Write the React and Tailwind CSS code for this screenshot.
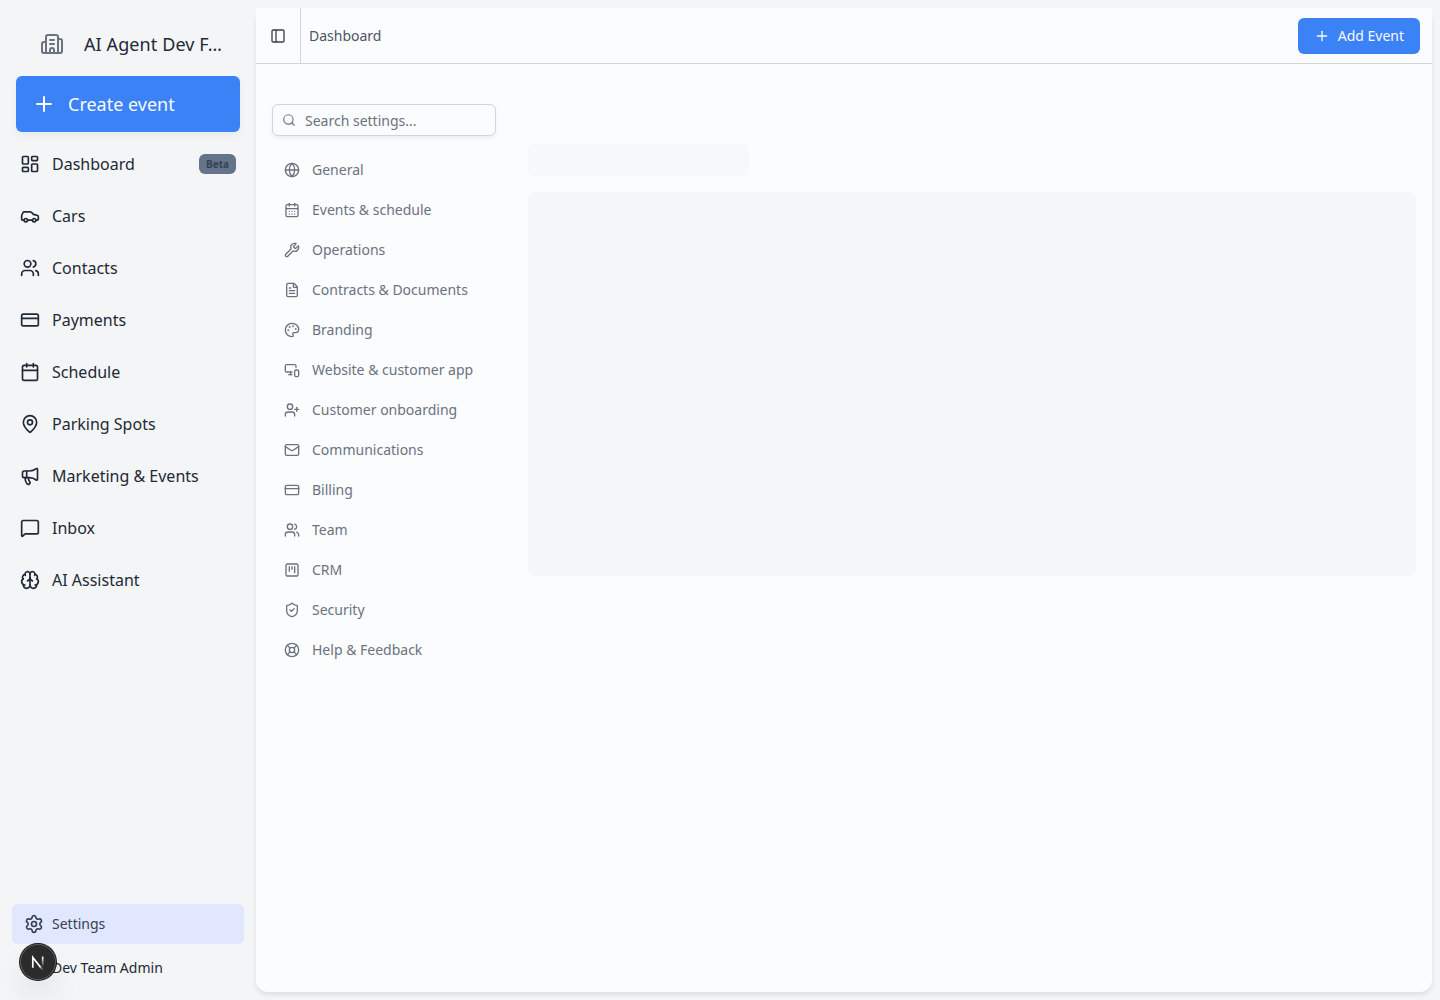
import React from "react";
import {
  Building2, Plus, LayoutDashboard, Car, Users, CreditCard, Calendar, MapPin, Megaphone,
  MessageSquare, Brain, Settings, PanelLeft, Search, Globe, CalendarDays, Wrench, FileText,
  Palette, MonitorSmartphone, UserPlus, Mail, SquareKanban, ShieldCheck, LifeBuoy,
} from "lucide-react";

const mainNav = [
  { label: "Dashboard", icon: LayoutDashboard, badge: "Beta" },
  { label: "Cars", icon: Car },
  { label: "Contacts", icon: Users },
  { label: "Payments", icon: CreditCard },
  { label: "Schedule", icon: Calendar },
  { label: "Parking Spots", icon: MapPin },
  { label: "Marketing & Events", icon: Megaphone },
  { label: "Inbox", icon: MessageSquare },
  { label: "AI Assistant", icon: Brain },
];

const settingsNav = [
  { label: "General", icon: Globe },
  { label: "Events & schedule", icon: CalendarDays },
  { label: "Operations", icon: Wrench },
  { label: "Contracts & Documents", icon: FileText },
  { label: "Branding", icon: Palette },
  { label: "Website & customer app", icon: MonitorSmartphone },
  { label: "Customer onboarding", icon: UserPlus },
  { label: "Communications", icon: Mail },
  { label: "Billing", icon: CreditCard },
  { label: "Team", icon: Users },
  { label: "CRM", icon: SquareKanban },
  { label: "Security", icon: ShieldCheck },
  { label: "Help & Feedback", icon: LifeBuoy },
];

function DevBadge() {
  return (
    <div className="absolute left-5 bottom-5 size-9 rounded-full bg-[#2b2b2b] shadow-[0_0_0_1px_#171717,inset_0_0_0_1px_#5a5a5a,0_16px_32px_-8px_rgba(0,0,0,0.24)]">
      <svg viewBox="0 0 36 36" className="size-9" fill="none">
        <defs>
          <linearGradient id="diag" x1="20" y1="20" x2="24" y2="26" gradientUnits="userSpaceOnUse">
            <stop stopColor="#fff" />
            <stop offset="1" stopColor="#fff" stopOpacity="0" />
          </linearGradient>
          <linearGradient id="stem" x1="22.6" y1="13" x2="22.6" y2="23" gradientUnits="userSpaceOnUse">
            <stop stopColor="#fff" />
            <stop offset="1" stopColor="#fff" stopOpacity="0" />
          </linearGradient>
        </defs>
        <path d="M12.8 23.8V13.4l7.6 9.6" stroke="#fff" strokeWidth="1.7" />
        <path d="M20 22.5l2.8 3.4" stroke="url(#diag)" strokeWidth="1.7" />
        <path d="M22.7 12.6V23" stroke="url(#stem)" strokeWidth="1.7" />
      </svg>
    </div>
  );
}

function Sidebar() {
  return (
    <aside className="flex w-64 shrink-0 flex-col text-[#1f2937]">
      <div className="mt-5 flex h-12 items-center gap-5 pl-10 pr-8">
        <Building2 className="size-6 shrink-0 text-[#6b7280]" strokeWidth={2} />
        <span className="whitespace-nowrap text-lg tracking-[0.1px]">AI Agent Dev F…</span>
      </div>
      <button className="mx-4 mt-2 flex h-14 shrink-0 items-center gap-3 rounded-md bg-[#3b82f6] px-4 text-lg text-[#f8fafc] shadow-[0_4px_8px_rgba(0,0,0,0.05)]">
        <Plus className="size-6" />
        Create event
      </button>
      <nav className="mt-2 flex flex-col gap-1 px-3">
        {mainNav.map(({ label, icon: Icon, badge }) => (
          <a key={label} className="flex h-12 items-center gap-3 px-2">
            <Icon className="size-5 shrink-0" />
            <span className="text-base">{label}</span>
            {badge && (
              <span className="ml-auto flex h-5 w-[37px] items-center justify-center rounded-md bg-[#64748b] text-[10px] font-bold text-[#374151]">
                {badge}
              </span>
            )}
          </a>
        ))}
      </nav>
      <div className="mt-auto mb-3 px-3 text-sm">
        <a className="flex h-10 items-center gap-2 rounded-md bg-[#e0e7ff] pl-3 text-[#374151]">
          <Settings className="size-5" />
          Settings
        </a>
        <div className="mt-1 flex h-10 items-center pl-10">Dev Team Admin</div>
      </div>
    </aside>
  );
}

export default function App() {
  return (
    <div className="relative flex h-[1000px] w-[1440px] overflow-hidden bg-[#f3f5f6] font-['Noto_Sans',sans-serif]">
      <Sidebar />
      <main className="my-2 mr-2 flex flex-1 flex-col rounded-t-xl rounded-b-xl bg-[#fafcfe] shadow-[0_3px_5px_rgba(0,0,0,0.09)]">
        <header className="flex h-14 items-center border-b border-[#d1d5db] bg-[#fafcfe] pr-3 text-sm text-[#4b5563]">
          <div className="flex h-full w-[45px] items-center border-r border-[#d1d5db] pl-3.5 text-[#374151]">
            <PanelLeft className="size-4" />
          </div>
          <span className="ml-2">Dashboard</span>
          <button className="ml-auto flex h-9 items-center gap-2 rounded-md bg-[#3b82f6] px-4 text-[#f8fafc]">
            <Plus className="size-4" />
            Add Event
          </button>
        </header>
        <div className="flex gap-8 px-4 pt-10">
          <div className="w-56 shrink-0 text-sm text-[#6b7280]">
            <div className="flex h-8 items-center gap-2 rounded-md border border-[#d1d5db] px-[9px] shadow-[0_2px_4px_rgba(0,0,0,0.06)]">
              <Search className="size-3.5" />
              <span className="ml-px pt-0.5">Search settings...</span>
            </div>
            <nav className="mt-4 flex flex-col gap-1">
              {settingsNav.map(({ label, icon: Icon }) => (
                <a key={label} className="flex h-9 items-center gap-3 px-3">
                  <Icon className="size-4 shrink-0" />
                  {label}
                </a>
              ))}
            </nav>
          </div>
          <div className="flex flex-1 flex-col gap-4 pt-10">
            <div className="h-8 w-[221px] rounded-md bg-[#f6f8f9]" />
            <div className="h-96 rounded-md bg-[#f5f7f9]" />
          </div>
        </div>
      </main>
      <DevBadge />
    </div>
  );
}
